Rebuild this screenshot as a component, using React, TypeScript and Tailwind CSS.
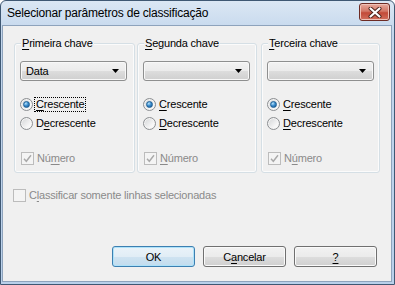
import React from "react";

function U({ children }: { children: React.ReactNode }) {
  return <span className="underline underline-offset-[2px] decoration-[1px]">{children}</span>;
}

function Radio({ checked }: { checked: boolean }) {
  return (
    <span className="w-[13px] h-[13px] rounded-full border border-[#8c8f92] bg-[linear-gradient(135deg,#d2d4d6,#f7f7f7_70%,#ffffff)] flex items-center justify-center shrink-0 shadow-[inset_0_0_0_1px_#f4f4f4]">
      {checked && (
        <span className="w-[7px] h-[7px] rounded-full bg-[radial-gradient(circle_at_35%_30%,#b8e4fb,#3d8fd0_45%,#10508a)] border border-[#1d5f95]" />
      )}
    </span>
  );
}

function Check({ checked }: { checked: boolean }) {
  return (
    <span className="w-[13px] h-[13px] border border-[#bcbcbc] bg-[#f4f4f4] flex items-center justify-center shrink-0">
      {checked && (
        <svg width="9" height="9" viewBox="0 0 9 9">
          <path d="M1 4.8 L3.3 7.3 L8 1.2" stroke="#a9a9a9" strokeWidth="1.4" fill="none" />
        </svg>
      )}
    </span>
  );
}

function Combo({ value }: { value?: string }) {
  return (
    <div className="w-[107px] h-[20px] rounded-[3px] border border-[#8e8f8f] bg-[linear-gradient(#f2f2f2,#ebebeb_50%,#dddddd_51%,#cfcfcf)] shadow-[inset_0_0_0_1px_#f8f8f8] flex items-center pl-[5px] pr-[7px]">
      <span className="flex-1 text-black">{value ?? ""}</span>
      <svg width="7" height="4" viewBox="0 0 7 4">
        <path d="M0 0 H7 L3.5 4 Z" fill="#000" />
      </svg>
    </div>
  );
}

function Group({
  width,
  label,
  value,
  cresc,
  decresc,
  numero,
  focus,
}: {
  width: string;
  label: React.ReactNode;
  value?: string;
  cresc: React.ReactNode;
  decresc: React.ReactNode;
  numero: React.ReactNode;
  focus?: boolean;
}) {
  return (
    <div className={`relative ${width} h-[130px] rounded-[3px] border border-[#d5dfe5] shadow-[inset_0_0_0_1px_#fbfbfb] flex flex-col pl-[5px] pt-[17px]`}>
      <span className="absolute -top-[9px] left-[6px] px-[1px] bg-[#f0f0f0] leading-[16px] text-black">{label}</span>
      <Combo value={value} />
      <div className="mt-[15px] h-[16px] flex items-center">
        <Radio checked />
        <span
          className={`ml-[1px] pl-[1px] pr-[1px] leading-[13px] border border-dotted ${focus ? "border-black" : "border-transparent"}`}
        >
          {cresc}
        </span>
      </div>
      <div className="mt-[3px] h-[16px] flex items-center">
        <Radio checked={false} />
        <span className="ml-[2px] pl-[1px] leading-[13px]">{decresc}</span>
      </div>
      <div className="mt-[19px] h-[16px] flex items-center pl-[1px]">
        <Check checked />
        <span className="ml-[3px] text-[#8a8a8a]">{numero}</span>
      </div>
    </div>
  );
}

function Btn({ children, def }: { children: React.ReactNode; def?: boolean }) {
  return (
    <div
      className={`w-[83px] h-[21px] rounded-[3px] border flex items-center justify-center text-black ${
        def
          ? "border-[#3c7fb1] bg-[linear-gradient(#eaf3f9,#e1edf6_50%,#cfe3f1_51%,#c2dcee)] shadow-[inset_0_0_0_1px_#aee2f9]"
          : "border-[#707070] bg-[linear-gradient(#f2f2f2,#ebebeb_50%,#dddddd_51%,#cfcfcf)] shadow-[inset_0_0_0_1px_#fafafa]"
      }`}
    >
      {children}
    </div>
  );
}

export default function App() {
  return (
    <div className="w-[395px] h-[285px] bg-white font-['Liberation_Sans',Arial,sans-serif] text-[11px] tracking-[-0.2px] leading-[16px] text-black">
      <div className="w-[395px] h-[285px] flex flex-col rounded-t-[6px] border border-[#3f5873] bg-[linear-gradient(#dbe7f4,#c3d6ec_12%,#b9d0ea)]">
        <div className="h-[24px] flex items-center pl-[6px] pr-[4px]">
          <span className="flex-1 text-[12px] text-black">Selecionar parâmetros de classificação</span>
          <div className="w-[31px] h-[18px] mt-[-2px] rounded-[3px] border border-[#6d2b24] bg-[linear-gradient(#e8a99c,#d27766_45%,#c24a38_55%,#d2705d)] shadow-[inset_0_0_0_1px_#efc2b8] flex items-center justify-center">
            <svg width="14" height="11" viewBox="0 0 14 11">
              <path d="M2.5 1.5 L11.5 9.5 M11.5 1.5 L2.5 9.5" stroke="#4a2019" strokeWidth="4" strokeLinecap="round" />
              <path d="M2.5 1.5 L11.5 9.5 M11.5 1.5 L2.5 9.5" stroke="#ffffff" strokeWidth="2.2" strokeLinecap="round" />
            </svg>
          </div>
        </div>
        <div className="flex-1 ml-[1px] mr-[2px] mb-[2px] border border-[#8ea3bc] bg-[#f0f0f0] flex flex-col">
          <div className="flex pl-[11px] pt-[17px]">
            <Group
              width="w-[121px]"
              label={<><U>P</U>rimeira chave</>}
              value="Data"
              focus
              cresc={<><U>C</U>rescente</>}
              decresc={<>D<U>e</U>crescente</>}
              numero={<>Nú<U>m</U>ero</>}
            />
            <div className="ml-[2px]">
              <Group
                width="w-[120px]"
                label={<><U>S</U>egunda chave</>}
                cresc={<><U>C</U>rescente</>}
                decresc={<><U>D</U>ecrescente</>}
                numero={<><U>N</U>úmero</>}
              />
            </div>
            <div className="ml-[4px]">
              <Group
                width="w-[119px]"
                label={<><U>T</U>erceira chave</>}
                cresc={<><U>C</U>rescente</>}
                decresc={<><U>D</U>ecrescente</>}
                numero={<>N<U>ú</U>mero</>}
              />
            </div>
          </div>
          <div className="flex items-center pl-[10px] mt-[14px] h-[16px]">
            <Check checked={false} />
            <span className="ml-[3px] text-[#8a8a8a]">
              C<U>l</U>assificar somente linhas selecionadas
            </span>
          </div>
          <div className="flex pl-[109px] mt-[43px] gap-[8px]">
            <Btn def>OK</Btn>
            <Btn>
              C<U>a</U>ncelar
            </Btn>
            <Btn>
              <U>?</U>
            </Btn>
          </div>
        </div>
      </div>
    </div>
  );
}
